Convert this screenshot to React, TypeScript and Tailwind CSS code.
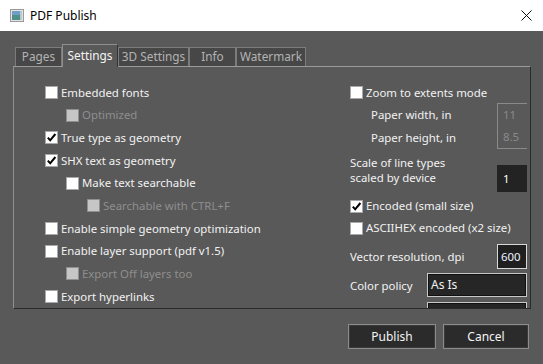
import clsx from "clsx";

const tabs = [
  { name: "Pages", w: "w-[47px]" },
  { name: "Settings", w: "w-[56px]", active: true },
  { name: "3D Settings", w: "w-[71px]" },
  { name: "Info", w: "w-[47px]" },
  { name: "Watermark", w: "w-[70px]" },
];

const leftRows = [
  { label: "Embedded fonts", level: 0 },
  { label: "Optimized", level: 1, disabled: true },
  { label: "True type as geometry", level: 0, checked: true },
  { label: "SHX text as geometry", level: 0, checked: true },
  { label: "Make text searchable", level: 1 },
  { label: "Searchable with CTRL+F", level: 2, disabled: true },
  { label: "Enable simple geometry optimization", level: 0 },
  { label: "Enable layer support (pdf v1.5)", level: 0 },
  { label: "Export Off layers too", level: 1, disabled: true },
  { label: "Export hyperlinks", level: 0 },
];

function Box({ checked, disabled }: { checked?: boolean; disabled?: boolean }) {
  return (
    <span
      className={clsx(
        "flex h-[13px] w-[13px] shrink-0 items-center justify-center border",
        disabled ? "border-[#8f8f8f] bg-[#c6c6c6]" : "border-[#a8a8a8] bg-white"
      )}
    >
      {checked && (
        <svg width="11" height="11" viewBox="0 0 11 11">
          <path d="M1.8 5.6 L4.2 8.3 L9.4 2" fill="none" stroke="#000" strokeWidth="2" />
        </svg>
      )}
    </span>
  );
}

function Check({
  label,
  checked,
  disabled,
  className,
}: {
  label: string;
  checked?: boolean;
  disabled?: boolean;
  className?: string;
}) {
  return (
    <div className={clsx("flex items-center gap-[3px]", className)}>
      <Box checked={checked} disabled={disabled} />
      <span className={disabled ? "text-[#8e8e8e]" : "text-[#f2f2f2]"}>{label}</span>
    </div>
  );
}

export default function App() {
  return (
    <div className="flex h-[364px] w-[543px] flex-col overflow-hidden bg-[#595959] font-['Noto_Sans',sans-serif] text-[11.4px] leading-none">
      {/* title bar */}
      <div className="flex h-[31px] shrink-0 items-center bg-white pl-[10px] pr-[11px]">
        <svg width="14" height="13" viewBox="0 0 14 13">
          <rect x="0.5" y="0.5" width="13" height="12" fill="#e4e4e4" stroke="#9a9a9a" />
          <rect x="2" y="2" width="8" height="9" fill="#4f8f8a" />
          <rect x="2" y="2" width="8" height="4" fill="#6f9fc4" />
          <rect x="10" y="2" width="2" height="9" fill="#b8c7d0" />
        </svg>
        <span className="ml-[6px] text-[12px] text-black">PDF Publish</span>
        <svg className="ml-auto" width="11" height="11" viewBox="0 0 11 11">
          <path d="M0.5 0.5 L10.5 10.5 M10.5 0.5 L0.5 10.5" stroke="#111" strokeWidth="1" />
        </svg>
      </div>

      {/* tabs */}
      <div className="relative z-10 ml-[15px] mt-[13px] flex h-[22px] shrink-0 items-end text-[11.8px]">
        {tabs.map((t) =>
          t.active ? (
            <div
              key={t.name}
              className={clsx(
                "-mb-px flex h-[23px] items-center justify-center border-l border-r border-t border-l-[#8f8f8f] border-r-[#333] border-t-[#8f8f8f] bg-[#595959] text-[#f4f4f4]",
                t.w
              )}
            >
              {t.name}
            </div>
          ) : (
            <div
              key={t.name}
              className={clsx(
                "flex h-[19px] items-center justify-center border-l border-r border-t border-[#7c7c7c] bg-[#474747] text-[#b3b3b3]",
                t.w
              )}
            >
              {t.name}
            </div>
          )
        )}
      </div>

      {/* panel */}
      <div className="ml-[13px] flex h-[243px] w-[518px] shrink-0 overflow-hidden border border-b-[#2a2a2a] border-l-[#8f8f8f] border-r-[#2a2a2a] border-t-[#9a9a9a]">
        <div className="w-[336px] pl-[31px] pt-[14px]">
          {leftRows.map((r) => (
            <Check
              key={r.label}
              label={r.label}
              checked={r.checked}
              disabled={r.disabled}
              className={clsx(
                "h-[22.7px]",
                r.level === 1 && "ml-[21px]",
                r.level === 2 && "ml-[42px]"
              )}
            />
          ))}
        </div>

        <div className="w-[177px] pt-[15px] text-[#f2f2f2]">
          <Check label="Zoom to extents mode" className="h-[21px]" />
          <div className="flex h-[23px] items-center justify-between pl-[21px]">
            <span>Paper width, in</span>
            <div className="flex h-[23px] w-[30px] items-center border-l border-t border-[#8a8a8a] pl-[5px] text-[#8a8a8a]">
              11
            </div>
          </div>
          <div className="flex h-[23px] items-center justify-between pl-[21px]">
            <span>Paper height, in</span>
            <div className="flex h-[23px] w-[30px] items-center border-b border-l border-[#8a8a8a] pl-[5px] text-[#8a8a8a]">
              8.5
            </div>
          </div>

          <div className="mt-[6px] flex h-[37px] justify-between">
            <div className="leading-[15px]">
              Scale of line types
              <br />
              scaled by device
            </div>
            <div className="mt-[10px] flex h-[27px] w-[30px] items-center bg-[#232323] pl-[6px] text-white">1</div>
          </div>

          <Check label="Encoded (small size)" checked className="mt-[3px] h-[22px]" />
          <Check label="ASCIIHEX encoded (x2 size)" className="h-[22px]" />

          <div className="mt-[5px] flex h-[25px] items-center justify-between">
            <span>Vector resolution, dpi</span>
            <div className="flex h-[25px] w-[30px] items-center border border-[#d8d8d8] bg-[#1f1f1f] pl-[3px] text-[#eef4ff]">
              600
            </div>
          </div>

          <div className="mt-[4px] flex h-[24px] items-center justify-between">
            <span className="mt-[2px]">Color policy</span>
            <div className="flex h-[24px] w-[100px] items-center border border-[#c8c8c8] bg-[#262626] pl-[3px] text-[12px] text-[#f2f2f2] shadow-[inset_0_0_0_1px_#111]">
              As Is
            </div>
          </div>
          <div className="ml-[77px] mt-[5px] h-[10px] w-[100px] border border-[#c8c8c8] bg-[#262626] shadow-[inset_0_0_0_1px_#111]" />
        </div>
      </div>

      {/* buttons */}
      <div className="mt-[15px] flex shrink-0 justify-end gap-[7px] pr-[14px] text-[12px]">
        <button className="flex h-[25px] w-[88px] items-center justify-center border border-[#8c8c8c] bg-[#2b2b2b] text-[#f4f4f4] shadow-[inset_0_0_0_1px_#3a3a3a]">
          Publish
        </button>
        <button className="flex h-[25px] w-[86px] items-center justify-center border border-[#8c8c8c] bg-[#2b2b2b] text-[#f4f4f4] shadow-[inset_0_0_0_1px_#3a3a3a]">
          Cancel
        </button>
      </div>
    </div>
  );
}
